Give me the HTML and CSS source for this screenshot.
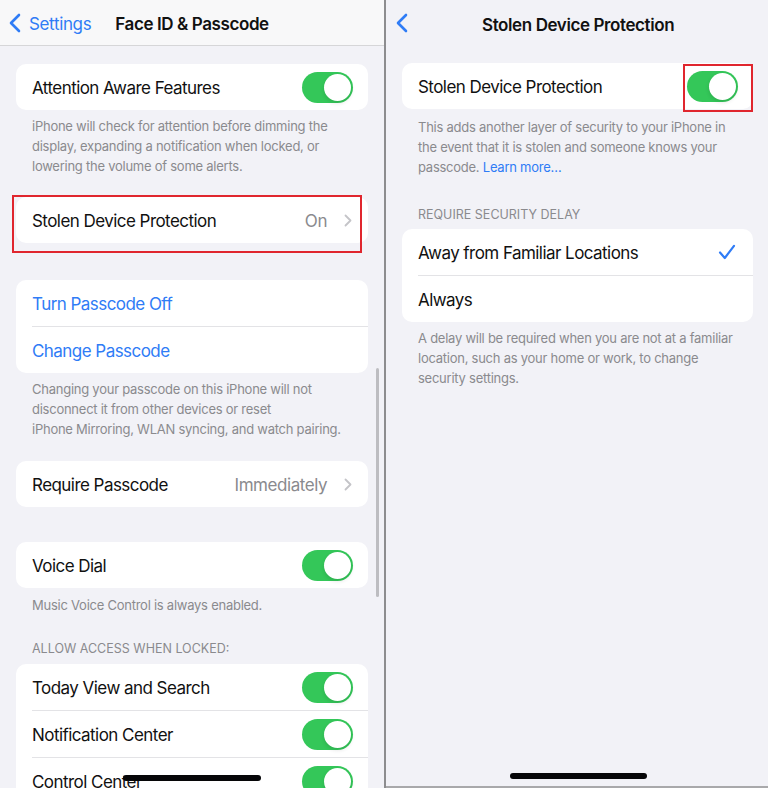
FILE: index.html
```html
<!DOCTYPE html>
<html>
<head>
<meta charset="utf-8">
<link rel="stylesheet" href="styles.css">
</head>
<body>
<div class="screens">
  <section class="panel panel-left">
    <header class="nav nav-left">
      <div class="back">
        <svg class="chev-back" width="12" height="20" viewBox="0 0 12 20"><path d="M10 2 L2 10 L10 18" fill="none" stroke="#2f7cf6" stroke-width="2.6" stroke-linecap="round" stroke-linejoin="round"/></svg>
        <span class="back-label">Settings</span>
      </div>
      <h1 class="nav-title">Face ID &amp; Passcode</h1>
    </header>
    <div class="content content-left">
      <div class="card c1">
        <div class="row"><div class="row-in"><span class="label">Attention Aware Features</span><span class="toggle"><span class="knob"></span></span></div></div>
      </div>
      <p class="footer f1">iPhone will check for attention before dimming the display, expanding a notification when locked, or lowering the volume of some alerts.</p>
      <div class="card c2">
        <div class="row"><div class="row-in"><span class="label">Stolen Device Protection</span><span class="detail">On</span><svg class="chev" width="8" height="13" viewBox="0 0 8 13"><path d="M1.5 1.5 L6.5 6.5 L1.5 11.5" fill="none" stroke="#c4c4c8" stroke-width="1.8" stroke-linecap="round" stroke-linejoin="round"/></svg></div></div>
      </div>
      <div class="card c3">
        <div class="row"><div class="row-in"><span class="label link">Turn Passcode Off</span></div></div>
        <div class="row"><div class="row-in"><span class="label link">Change Passcode</span></div></div>
      </div>
      <p class="footer f3">Changing your passcode on this iPhone will not disconnect it from other devices or reset iPhone&nbsp;Mirroring, WLAN syncing, and watch pairing.</p>
      <div class="card c4">
        <div class="row"><div class="row-in"><span class="label">Require Passcode</span><span class="detail">Immediately</span><svg class="chev" width="8" height="13" viewBox="0 0 8 13"><path d="M1.5 1.5 L6.5 6.5 L1.5 11.5" fill="none" stroke="#c4c4c8" stroke-width="1.8" stroke-linecap="round" stroke-linejoin="round"/></svg></div></div>
      </div>
      <div class="card c5">
        <div class="row"><div class="row-in"><span class="label">Voice Dial</span><span class="toggle"><span class="knob"></span></span></div></div>
      </div>
      <p class="footer f5">Music Voice Control is always enabled.</p>
      <h2 class="sec-head h6">ALLOW ACCESS WHEN LOCKED:</h2>
      <div class="card c6">
        <div class="row"><div class="row-in"><span class="label">Today View and Search</span><span class="toggle"><span class="knob"></span></span></div></div>
        <div class="row"><div class="row-in"><span class="label">Notification Center</span><span class="toggle"><span class="knob"></span></span></div></div>
        <div class="row"><div class="row-in"><span class="label">Control Center</span><span class="toggle"><span class="knob"></span></span></div></div>
      </div>
    </div>
    <div class="scrollbar"></div>
    <div class="highlight hl-left"></div>
    <div class="home home-left"></div>
  </section>
  <section class="panel panel-right">
    <header class="nav nav-right">
      <div class="back">
        <svg class="chev-back" width="12" height="20" viewBox="0 0 12 20"><path d="M10 2 L2 10 L10 18" fill="none" stroke="#2f7cf6" stroke-width="2.6" stroke-linecap="round" stroke-linejoin="round"/></svg>
      </div>
      <h1 class="nav-title title-right">Stolen Device Protection</h1>
    </header>
    <div class="content content-right">
      <div class="card r1">
        <div class="row"><div class="row-in"><span class="label">Stolen Device Protection</span><span class="toggle"><span class="knob"></span></span></div></div>
      </div>
      <p class="footer rf1">This adds another layer of security to your iPhone in the event that it is stolen and someone knows your passcode. <span class="link">Learn more…</span></p>
      <h2 class="sec-head rh2">REQUIRE SECURITY DELAY</h2>
      <div class="card r2">
        <div class="row"><div class="row-in"><span class="label">Away from Familiar Locations</span><svg class="check" width="18" height="16" viewBox="0 0 18 16"><path d="M2 8.5 L6.8 14 L16 1.8" fill="none" stroke="#2f7cf6" stroke-width="2.2" stroke-linecap="round" stroke-linejoin="round"/></svg></div></div>
        <div class="row"><div class="row-in"><span class="label">Always</span></div></div>
      </div>
      <p class="footer rf2">A delay will be required when you are not at a familiar location, such as your home or work, to change security settings.</p>
    </div>
    <div class="highlight hl-right"></div>
    <div class="home home-right"></div>
  </section>
</div>
</body>
</html>
```

FILE: styles.css
```css
* { box-sizing: border-box; }
html, body { margin: 0; padding: 0; }
body {
  width: 768px;
  height: 788px;
  overflow: hidden;
  background: #f2f2f7;
  font-family: "Inter", "Noto Sans", sans-serif;
  color: #111;
  -webkit-font-smoothing: antialiased;
}
.screens {
  display: flex;
  width: 768px;
  height: 788px;
}
.panel {
  position: relative;
  height: 788px;
  overflow: hidden;
  background: #f2f2f7;
}
.panel-left {
  width: 386px;
  border-right: 2px solid #8d8d8f;
}
.panel-right {
  width: 382px;
  border-bottom: 2px solid #a9a9ab;
}

/* nav bars */
.nav {
  height: 46px;
  display: flex;
  align-items: center;
  position: relative;
}
.nav-left {
  background: #f8f8f9;
  border-bottom: 1px solid #d6d6d8;
  padding-left: 9px;
}
.nav-right {
  padding-left: 10px;
}
.back {
  display: flex;
  align-items: center;
  gap: 8px;
  height: 46px;
}
.chev-back { display: block; }
.back-label {
  color: #2f7cf6;
  font-size: 17px;
  letter-spacing: -0.35px;
  margin-top: 3px;
}
.nav-title {
  margin: 3px 0 0 24px;
  font-size: 17px;
  font-weight: 600;
  letter-spacing: -0.4px;
  color: #111;
}
.title-right {
  margin-left: 74px;
}

/* content */
.content {
  display: flex;
  flex-direction: column;
}
.content-left { padding: 0 16px 0 16px; width: 384px; }
.content-right { padding: 0 15px 0 16px; }

.card {
  background: #fff;
  border-radius: 10px;
  overflow: hidden;
}
.row {
  padding-left: 16px;
}
.row-in {
  height: 46px;
  display: flex;
  align-items: center;
  padding-right: 15px;
}
.row + .row .row-in {
  height: 47px;
  border-top: 1px solid #e3e3e6;
}
.label {
  flex: 1;
  font-size: 17px;
  letter-spacing: -0.55px;
  color: #111;
  white-space: nowrap;
  padding-top: 2px;
}
.link { color: #2f7cf6; }
.detail {
  font-size: 17px;
  letter-spacing: -0.45px;
  color: #8a8a8e;
  margin-right: 17px;
  padding-top: 2px;
}
.chev { display: block; margin-right: 1px; }
.check { display: block; margin-right: 2px; }

.toggle {
  width: 51px;
  height: 31px;
  border-radius: 16px;
  background: #34c759;
  display: flex;
  align-items: center;
  justify-content: flex-end;
  padding: 2px;
  flex: none;
}
.knob {
  width: 27px;
  height: 27px;
  border-radius: 50%;
  background: #fff;
  box-shadow: 0 2px 4px rgba(0,0,0,0.12);
}

.footer {
  margin: 0;
  padding: 0 14px 0 16px;
  font-size: 13px;
  line-height: 20px;
  letter-spacing: -0.25px;
  color: #8a8a8e;
}
.sec-head {
  margin: 0;
  padding: 0 16px;
  font-size: 12.5px;
  line-height: 16px;
  font-weight: 400;
  letter-spacing: 0;
  color: #8a8a8e;
}

/* left spacing */
.c1 { margin-top: 18px; }
.f1 { margin-top: 6px; }
.c2 { margin-top: 21px; }
.c3 { margin-top: 37px; }
.f3 { margin-top: 6px; }
.c4 { margin-top: 22px; }
.c5 { margin-top: 35px; }
.f5 { margin-top: 7px; }
.h6 { margin-top: 26px; }
.c6 { margin-top: 7px; }

/* right spacing */
.r1 { margin-top: 17px; }
.rf1 { margin-top: 8px; }
.rh2 { margin-top: 30px; }
.r2 { margin-top: 6px; }
.rf2 { margin-top: 6px; }

/* overlays */
.scrollbar {
  position: absolute;
  left: 376px;
  top: 368px;
  width: 3px;
  height: 229px;
  border-radius: 2px;
  background: #bdbdc1;
}
.highlight {
  position: absolute;
  border: 2px solid #e0262e;
}
.hl-left {
  left: 12px;
  top: 195px;
  width: 350px;
  height: 58px;
}
.hl-right {
  left: 297px;
  top: 64px;
  width: 70px;
  height: 48px;
}
.home {
  position: absolute;
  height: 6px;
  border-radius: 3px;
  background: #060608;
}
.home-left {
  left: 123px;
  top: 775px;
  width: 138px;
}
.home-right {
  left: 124px;
  top: 773px;
  width: 137px;
}
```
